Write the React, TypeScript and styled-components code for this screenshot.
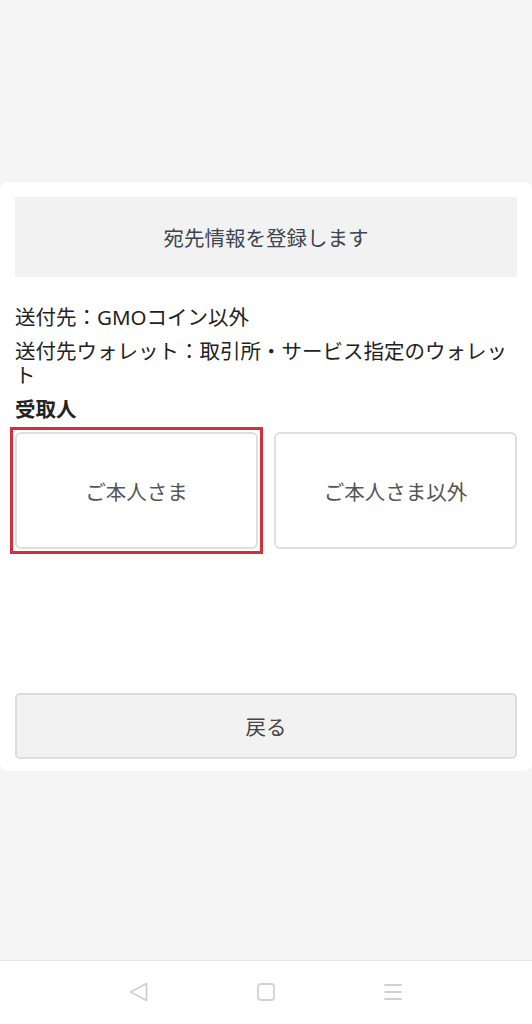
import styled, { createGlobalStyle } from 'styled-components';

const GlobalStyle= createGlobalStyle`
  html, body {
    margin : 0;
    padding: 0;
    background: #f5f5f5;
  }
  * { box-sizing: border-box; }
`;

const Page= styled.div`
  height : 1024px;
  width  : 100%;
  display: flex;
  flex-direction: column;
  background : #f5f5f5;
  font-family: "Noto Sans", "Noto Sans CJK JP", sans-serif;
`;

const Main= styled.main`
  flex: 1;
  padding-top: 182px;
`;

const Card= styled.section`
  width  : 100%;
  padding: 15px 15px 12px;
  background   : #ffffff;
  border-radius: 8px;
`;

const Heading= styled.div`
  height     : 80px;
  display    : flex;
  align-items: center;
  justify-content: center;
  background : #f2f2f2;
  color      : #3d4650;
  font-size  : 20.5px;
`;

const Info= styled.div`
  margin-top: 28px;
  display   : flex;
  flex-direction: column;
  row-gap   : 10px;
`;

const InfoLine= styled.p<{ $bold?: boolean }>`
  margin     : 0;
  font-size  : 20.5px;
  line-height: 24px;
  color      : #222222;
  font-weight: ${ p => p.$bold ? 700 : 400 };
  line-break : strict;
`;

const ChoiceRow= styled.div`
  margin-top: 11px;
  display   : grid;
  grid-template-columns: 1fr 1fr;
  column-gap: 16px;
`;

const ChoiceButton= styled.button<{ $focused?: boolean }>`
  position     : relative;
  height       : 117px;
  background   : #ffffff;
  border       : 2px solid #dedede;
  border-radius: 6px;
  color        : #555555;
  font-family  : inherit;
  font-size    : 20.5px;
  padding      : 0;

  /* square focus ring lying over the card */
  &::after {
    content : '';
    display : ${ p => p.$focused ? 'block' : 'none' };
    position: absolute;
    inset   : -7px;
    border  : 3px solid #d3303e;
    pointer-events: none;
  }
`;

const BackButton= styled.button`
  margin-top   : 144px;
  width        : 100%;
  height       : 66px;
  background   : #f2f2f2;
  border       : 2px solid #dcdcdc;
  border-radius: 5px;
  color        : #444444;
  font-family  : inherit;
  font-size    : 20.5px;
`;

const NavBar= styled.nav`
  height     : 64px;
  display    : flex;
  align-items: center;
  justify-content: center;
  column-gap : 107px;
  background : #ffffff;
  border-top : 1px solid #e6e6e6;
  padding-bottom: 2px;
`;

const NavIcon= styled.svg`
  width : 20px;
  height: 20px;
  stroke: #d0d0d0;
  stroke-width: 1.8;
  fill  : none;
  stroke-linecap : round;
  stroke-linejoin: round;
`;

export default function App() {
  return (
    <>
      <GlobalStyle />
      <Page>
        <Main>
          <Card>
            <Heading>宛先情報を登録します</Heading>
            <Info>
              <InfoLine>送付先：GMOコイン以外</InfoLine>
              <InfoLine>送付先ウォレット：取引所・サービス指定のウォレット</InfoLine>
              <InfoLine $bold>受取人</InfoLine>
            </Info>
            <ChoiceRow>
              <ChoiceButton $focused>ご本人さま</ChoiceButton>
              <ChoiceButton>ご本人さま以外</ChoiceButton>
            </ChoiceRow>
            <BackButton>戻る</BackButton>
          </Card>
        </Main>
        <NavBar>
          <NavIcon viewBox="0 0 20 20">
            <path d="M17.5 1.5 L1.5 10 L17.5 18.5 Z" />
          </NavIcon>
          <NavIcon viewBox="0 0 20 20">
            <rect x="2" y="2" width="16" height="16" rx="3" />
          </NavIcon>
          <NavIcon viewBox="0 0 20 20">
            <path d="M2 3 H18 M2 10 H18 M2 17 H18" />
          </NavIcon>
        </NavBar>
      </Page>
    </>
  );
}
